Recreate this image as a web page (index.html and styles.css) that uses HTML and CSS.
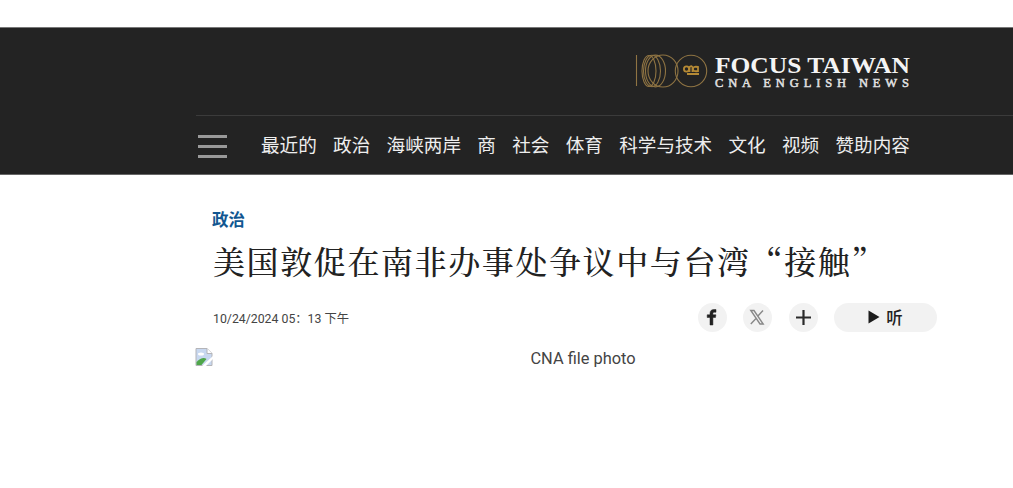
FILE: index.html
```html
<!DOCTYPE html>
<html lang="zh-CN">
<head>
    <meta charset="UTF-8">
    <meta name="viewport" content="width=device-width, initial-scale=1.0">
    <title>Focus Taiwan</title>
    <link rel="stylesheet" href="styles.css">
</head>
<body>
    <header class="site-header">
        <div class="brand">
            <svg class="logo" width="290" height="40" viewBox="0 0 290 40">
                <g fill="none" stroke="#8f7443" stroke-width="1.1">
                    <path d="M3.500 3v31"/>
                    <ellipse cx="16" cy="19" rx="7" ry="15.500"/>
                    <ellipse cx="19" cy="19" rx="8.500" ry="15.700"/>
                    <ellipse cx="22.500" cy="19" rx="10" ry="15.900"/>
                    <ellipse cx="30" cy="19" rx="15" ry="16"/>
                    <circle cx="58" cy="19" r="15.700"/>
                </g>
                <g fill="none" stroke="#b58a35" stroke-width="1.8">
                    <circle cx="53.500" cy="17" r="2.600"/>
                    <path d="M56.500 20v-5q3-2 3 1v4M65 20v-5q-5-1-5 2t5 2M54 22h12"/>
                </g>
                <text class="logo-name" x="82" y="20.500" textLength="195" lengthAdjust="spacingAndGlyphs">FOCUS TAIWAN</text>
                <text class="logo-sub" x="82" y="34.500" textLength="194">CNA ENGLISH NEWS</text>
            </svg>
        </div>
        <nav class="main-nav">
            <div class="menu-icon"><span></span><span></span><span></span></div>
            <ul class="nav-list">
                <li>最近的</li>
                <li>政治</li>
                <li>海峡两岸</li>
                <li>商</li>
                <li>社会</li>
                <li>体育</li>
                <li>科学与技术</li>
                <li>文化</li>
                <li>视频</li>
                <li>赞助内容</li>
            </ul>
        </nav>
    </header>

    <main class="article">
        <div class="category">政治</div>
        <h1 class="title">美国敦促在南非办事处争议中与台湾“接触”</h1>
        <div class="meta">
            <div class="date">10/24/2024 05：13 下午</div>
            <div class="share">
                <span class="share-button">
                    <svg width="28" height="28" viewBox="0 0 28 28"><path d="M12 22v-7.500H9.200v-2.700H12V10.500C12 7.700 13.500 6.500 16 6.500h2v2.700h-1.500c-1.200 0-1.600.5-1.600 1.500v1.100h3l-.4 2.700h-2.600V22z" fill="#222" stroke="#222" stroke-width="0.500"/></svg>
                </span>
                <span class="share-button">
                    <svg width="28" height="28" viewBox="0 0 28 28" fill="none" stroke="#888"><path d="M7.800 7.500h3.200l9.200 13.500H17zM20 7.500l-5.300 5.800M13 15.500L7.800 21" stroke-width="1.400"/></svg>
                </span>
                <span class="share-button">
                    <svg width="28" height="28" viewBox="0 0 28 28"><path d="M14.500 7v15M7 14.500h15" stroke="#2a2a2a" stroke-width="2.200"/></svg>
                </span>
                <span class="listen">
                    <svg width="12" height="14" viewBox="0 0 12 14"><path d="M0.500 0.500L11.500 7L0.500 13.500z" fill="#1c1c1c"/></svg>
                    听
                </span>
            </div>
        </div>
        <div class="photo">
            <svg class="broken-image" width="18" height="18" viewBox="0 0 18 18">
                <path d="M1 .5h11l5 5v12H1z" fill="#c8d8f0" stroke="#b4b4b8"/>
                <path d="M12 .5v5h5" fill="#fff" stroke="#b4b4b8"/>
                <ellipse cx="6" cy="6" rx="3" ry="1.500" fill="#fff"/>
                <path d="M1.500 17v-3q6-6 10-3l-5 6z" fill="#4fa64a"/>
                <path d="M7 18L18 8v3l-7 7z" fill="#fff"/>
            </svg>
            <span class="caption">CNA file photo</span>
        </div>
    </main>
</body>
</html>
```

FILE: styles.css
```css
* {
    margin: 0;
    padding: 0;
    box-sizing: border-box;
}

body {
    font-family: Roboto, "Noto Sans CJK SC", sans-serif;
    background: #fff;
    color: #222;
    padding-top: 27px;
    overflow: hidden;
}

svg {
    display: block;
    flex: none;
}

.site-header {
    height: 148px;
    padding-left: 196px;
    background: #232323;
    border-top: 1px solid #777;
    border-bottom: 1px solid #666;
}

.brand {
    height: 87px;
    padding: 24px 0 0 437px;
}

.logo {
    font-family: "Liberation Serif", serif;
    fill: #f4f4f4;
}

.logo-name {
    font-size: 23.5px;
    font-weight: bold;
}

.logo-sub {
    font-size: 12.5px;
    fill: #e2e2e2;
    stroke: #e2e2e2;
    stroke-width: 0.5px;
}

.main-nav {
    height: 59px;
    display: flex;
    align-items: center;
    border-top: 1px solid #3b3b3b;
}

.menu-icon {
    width: 29px;
    height: 23px;
    margin: 2px 36px 0 2px;
    display: flex;
    flex-direction: column;
    justify-content: space-between;
}

.menu-icon span {
    height: 3px;
    background: #999;
}

.nav-list {
    display: flex;
    gap: 16.3px;
    list-style: none;
    font-family: "Noto Sans CJK SC", sans-serif;
    font-size: 18.6px;
    line-height: 28px;
    color: #eee;
    white-space: nowrap;
    margin: -3px 0 0 -2px;
}

.article {
    padding: 32px 76px 0 196px;
}

.category {
    padding-left: 16px;
    font-family: "Noto Sans CJK SC", sans-serif;
    font-size: 16.5px;
    font-weight: bold;
    line-height: 24px;
    color: #125791;
}

.title {
    padding-left: 17px;
    font-family: "Noto Serif CJK SC", "Noto Sans CJK SC", serif;
    font-size: 32px;
    font-weight: 500;
    letter-spacing: 1.6px;
    line-height: 46px;
    margin-top: 6px;
    white-space: nowrap;
}

.meta {
    display: flex;
    justify-content: space-between;
    align-items: center;
    height: 30px;
    margin-top: 19px;
    padding-left: 17px;
}

.date {
    font-size: 12.3px;
    color: #444;
    padding-top: 2px;
}

.share {
    display: flex;
    align-items: center;
    gap: 16.5px;
}

.share-button {
    width: 29px;
    height: 29px;
    border-radius: 50%;
    background: #f2f2f2;
}

.listen {
    display: flex;
    align-items: center;
    justify-content: center;
    gap: 6px;
    width: 103px;
    height: 29px;
    border-radius: 15px;
    background: #f2f2f2;
    font-size: 16.5px;
    font-weight: 500;
}

.photo {
    display: flex;
    align-items: center;
    height: 22px;
    margin: 14px 0 0 -1px;
}

.caption {
    flex: 1;
    padding: 2px 0 0 16px;
    text-align: center;
    font-size: 16.4px;
    color: #444;
}
```
